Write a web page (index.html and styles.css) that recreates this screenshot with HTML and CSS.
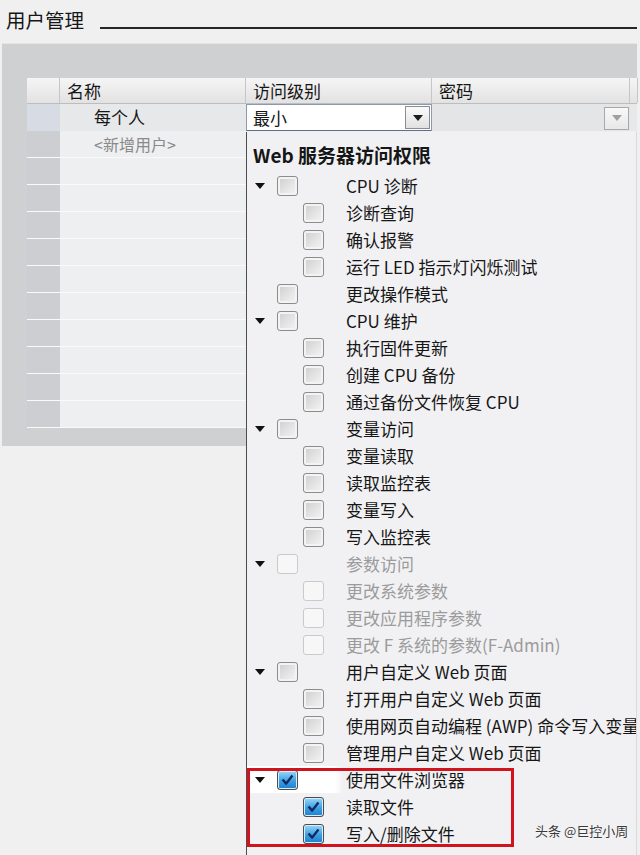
FILE: index.html
```html
<!DOCTYPE html>
<html lang="zh-CN">
<head>
  <meta charset="UTF-8">
  <title>用户管理</title>
  <link rel="stylesheet" href="styles.css">
</head>
<body>
  <header class="title-bar">
    <h1>用户管理</h1>
    <span class="rule"></span>
  </header>

  <section class="editor">
    <div class="grid">
      <div class="row head">
        <div class="cell rh"></div>
        <div class="cell">名称</div>
        <div class="cell">访问级别</div>
        <div class="cell">密码</div>
        <div class="cell"></div>
      </div>
      <div class="row current">
        <div class="cell rh"></div>
        <div class="cell name">每个人</div>
        <div class="cell">
          <div class="combo">
            <span class="combo-text">最小</span>
            <span class="combo-btn"><i class="arrow"></i></span>
          </div>
        </div>
        <div class="cell pwd">
          <span class="combo-btn off"><i class="arrow"></i></span>
        </div>
        <div class="cell"></div>
      </div>
      <div class="row">
        <div class="cell rh"></div>
        <div class="cell name add">&lt;新增用户&gt;</div>
        <div class="cell"></div><div class="cell"></div><div class="cell"></div>
      </div>
      <div class="row"><div class="cell rh"></div><div class="cell"></div><div class="cell"></div><div class="cell"></div><div class="cell"></div></div>
      <div class="row"><div class="cell rh"></div><div class="cell"></div><div class="cell"></div><div class="cell"></div><div class="cell"></div></div>
      <div class="row"><div class="cell rh"></div><div class="cell"></div><div class="cell"></div><div class="cell"></div><div class="cell"></div></div>
      <div class="row"><div class="cell rh"></div><div class="cell"></div><div class="cell"></div><div class="cell"></div><div class="cell"></div></div>
      <div class="row"><div class="cell rh"></div><div class="cell"></div><div class="cell"></div><div class="cell"></div><div class="cell"></div></div>
      <div class="row"><div class="cell rh"></div><div class="cell"></div><div class="cell"></div><div class="cell"></div><div class="cell"></div></div>
      <div class="row"><div class="cell rh"></div><div class="cell"></div><div class="cell"></div><div class="cell"></div><div class="cell"></div></div>
      <div class="row"><div class="cell rh"></div><div class="cell"></div><div class="cell"></div><div class="cell"></div><div class="cell"></div></div>
      <div class="row"><div class="cell rh"></div><div class="cell"></div><div class="cell"></div><div class="cell"></div><div class="cell"></div></div>
      <div class="row"><div class="cell rh"></div><div class="cell"></div><div class="cell"></div><div class="cell"></div><div class="cell"></div></div>
    </div>

    <!-- access level dropdown -->
    <div class="dropdown">
      <div class="heading">Web 服务器访问权限</div>
      <ul class="tree">
        <li class="item"><i class="twisty"></i><span class="cb"></span><span class="label">CPU 诊断</span></li>
        <li class="item sub"><span class="cb"></span><span class="label">诊断查询</span></li>
        <li class="item sub"><span class="cb"></span><span class="label">确认报警</span></li>
        <li class="item sub"><span class="cb"></span><span class="label">运行 LED 指示灯闪烁测试</span></li>
        <li class="item"><span class="cb"></span><span class="label">更改操作模式</span></li>
        <li class="item"><i class="twisty"></i><span class="cb"></span><span class="label">CPU 维护</span></li>
        <li class="item sub"><span class="cb"></span><span class="label">执行固件更新</span></li>
        <li class="item sub"><span class="cb"></span><span class="label">创建 CPU 备份</span></li>
        <li class="item sub"><span class="cb"></span><span class="label">通过备份文件恢复 CPU</span></li>
        <li class="item"><i class="twisty"></i><span class="cb"></span><span class="label">变量访问</span></li>
        <li class="item sub"><span class="cb"></span><span class="label">变量读取</span></li>
        <li class="item sub"><span class="cb"></span><span class="label">读取监控表</span></li>
        <li class="item sub"><span class="cb"></span><span class="label">变量写入</span></li>
        <li class="item sub"><span class="cb"></span><span class="label">写入监控表</span></li>
        <li class="item off"><i class="twisty"></i><span class="cb"></span><span class="label">参数访问</span></li>
        <li class="item sub off"><span class="cb"></span><span class="label">更改系统参数</span></li>
        <li class="item sub off"><span class="cb"></span><span class="label">更改应用程序参数</span></li>
        <li class="item sub off"><span class="cb"></span><span class="label">更改 F 系统的参数(F-Admin)</span></li>
        <li class="item"><i class="twisty"></i><span class="cb"></span><span class="label">用户自定义 Web 页面</span></li>
        <li class="item sub"><span class="cb"></span><span class="label">打开用户自定义 Web 页面</span></li>
        <li class="item sub"><span class="cb"></span><span class="label">使用网页自动编程 (AWP) 命令写入变量</span></li>
        <li class="item sub"><span class="cb"></span><span class="label">管理用户自定义 Web 页面</span></li>
      </ul>
      <ul class="tree highlight">
        <li class="item focus"><i class="twisty"></i><span class="cb on"><svg viewBox="0 0 20 20"><path d="M4.5 9.5 L8.5 14 L15.5 5"/></svg></span><span class="label">使用文件浏览器</span></li>
        <li class="item sub"><span class="cb on"><svg viewBox="0 0 20 20"><path d="M4.5 9.5 L8.5 14 L15.5 5"/></svg></span><span class="label">读取文件</span></li>
        <li class="item sub"><span class="cb on"><svg viewBox="0 0 20 20"><path d="M4.5 9.5 L8.5 14 L15.5 5"/></svg></span><span class="label">写入/删除文件</span></li>
      </ul>
    </div>
  </section>

  <div class="watermark">头条 @巨控小周</div>
</body>
</html>
```

FILE: styles.css
```css
* {
  box-sizing: border-box;
}

body {
  margin: 0;
  height: 855px;
  overflow: hidden;
  background: #f0f0f0;
  font-family: "Noto Sans CJK SC", "Noto Sans", sans-serif;
  color: #161616;
}

.title-bar {
  display: flex;
  padding: 8px 3px 11px 6px;
}

.title-bar h1 {
  margin: 0;
  font-size: 19.5px;
  font-weight: normal;
  line-height: 24px;
}

.title-bar .rule {
  flex: 1;
  height: 2px;
  background: #262626;
  align-self: flex-end;
  margin: 0 0 3px 16px;
}

.editor {
  position: relative;
  margin: 0 3px 0 2px;
  padding: 34px 0 18px 25px;
  background: #cfd0d2;
  border-top: 1px solid #e4e4e4;
}

/* user table */
.row {
  display: grid;
  grid-template-columns: 33px 186px 186px 198px 7px;
  height: 27px;
  border-bottom: 1px solid #fafafa;
}

.cell {
  background: #eeeff1;
  font-size: 17px;
  line-height: 26px;
  white-space: nowrap;
}

.cell.rh {
  background: #cdced1;
}

.row.head {
  height: 26px;
  border-bottom: 1px solid #bdbdbd;
}

.row.head .cell {
  background: linear-gradient(#f5f5f5, #e2e2e3);
  border-right: 1px solid #c6c6c6;
  padding-left: 7px;
  line-height: 25px;
}

.row.current .cell {
  background: #e7e8ea;
}

.row.current .cell.rh {
  background: #d7dce4;
}

.cell.name {
  padding-left: 34px;
}

.cell.add {
  color: #8a8a8a;
  font-size: 16px;
}

.combo {
  display: flex;
  align-items: center;
  height: 28px;
  background: #fff;
  border: 1px solid #8c9ab0;
  border-bottom: 2px solid #5d708f;
}

.combo-text {
  flex: 1;
  padding-left: 6px;
  line-height: 24px;
}

.combo-btn {
  display: flex;
  align-items: center;
  justify-content: center;
  width: 25px;
  height: 23px;
  margin-right: 1px;
  border: 1px solid #8d8d8d;
  background: linear-gradient(#fbfbfb, #e1e1e1);
}

.arrow {
  width: 0;
  height: 0;
  border-left: 5px solid transparent;
  border-right: 5px solid transparent;
  border-top: 6px solid #1c1c1c;
}

.row.current .cell.pwd {
  display: flex;
  justify-content: flex-end;
  align-items: center;
  background: #e4e5e7;
}

.combo-btn.off {
  border-color: #a9a9a9;
  background: linear-gradient(#f8f8f8, #e8e8e8);
}

.combo-btn.off .arrow {
  border-top-color: #a0a0a0;
}

/* dropdown */
.dropdown {
  position: absolute;
  left: 244px;
  top: 88px;
  width: 391px;
  height: 730px;
  overflow: hidden;
  background: #f1f1f3;
  border-left: 1px solid #4d4d4d;
  border-right: 1px solid #dadada;
}

.heading {
  height: 40px;
  padding: 8px 0 0 6px;
  font-size: 19px;
  font-weight: bold;
  line-height: 30px;
}

.tree {
  margin: 0;
  padding: 0;
  list-style: none;
}

.item {
  display: grid;
  grid-template-columns: 30px 26px 43px 1fr;
  align-items: center;
  height: 27px;
  font-size: 17px;
  line-height: 27px;
  white-space: nowrap;
}

.twisty {
  grid-column: 1;
  width: 0;
  height: 0;
  margin-left: 8px;
  border-left: 5.5px solid transparent;
  border-right: 5.5px solid transparent;
  border-top: 6px solid #111;
}

.cb {
  grid-column: 2;
  width: 21px;
  height: 20px;
  border: 1px solid #8c8c8c;
  border-radius: 3px;
  background: linear-gradient(135deg, #cdcdcd, #e6e6e6 60%, #f4f4f4);
  box-shadow: inset 0 0 0 2px #f3f3f3;
}

.item.sub .cb {
  grid-column: 3;
}

.label {
  grid-column: 4;
}

.item.off {
  color: #9b9b9b;
}

.item.off .cb {
  border-color: #cacaca;
  background: #f7f7f7;
  box-shadow: none;
}

.cb.on {
  border-color: #4c4c4c;
  background: linear-gradient(#9ad8f8, #3a9fe2 55%, #1d7fd0);
  box-shadow: inset 0 0 0 1px #d6eefb;
}

.cb.on svg {
  display: block;
  width: 100%;
  height: 100%;
}

.cb.on path {
  fill: none;
  stroke: #14275e;
  stroke-width: 2.6;
  stroke-linejoin: round;
}

.highlight {
  position: relative;
}

.highlight::after {
  content: "";
  position: absolute;
  left: 0;
  top: 2px;
  width: 261px;
  bottom: 0;
  border: 3px solid #d0141e;
  pointer-events: none;
}

.item.focus {
  background: linear-gradient(90deg, #fff 0, #fff 88px, rgba(255, 255, 255, 0) 96px);
}

.watermark {
  position: absolute;
  left: 535px;
  top: 821px;
  font-size: 13px;
  line-height: 20px;
  color: #3a3a3a;
  text-shadow: 0 0 2px #fff;
}
```
